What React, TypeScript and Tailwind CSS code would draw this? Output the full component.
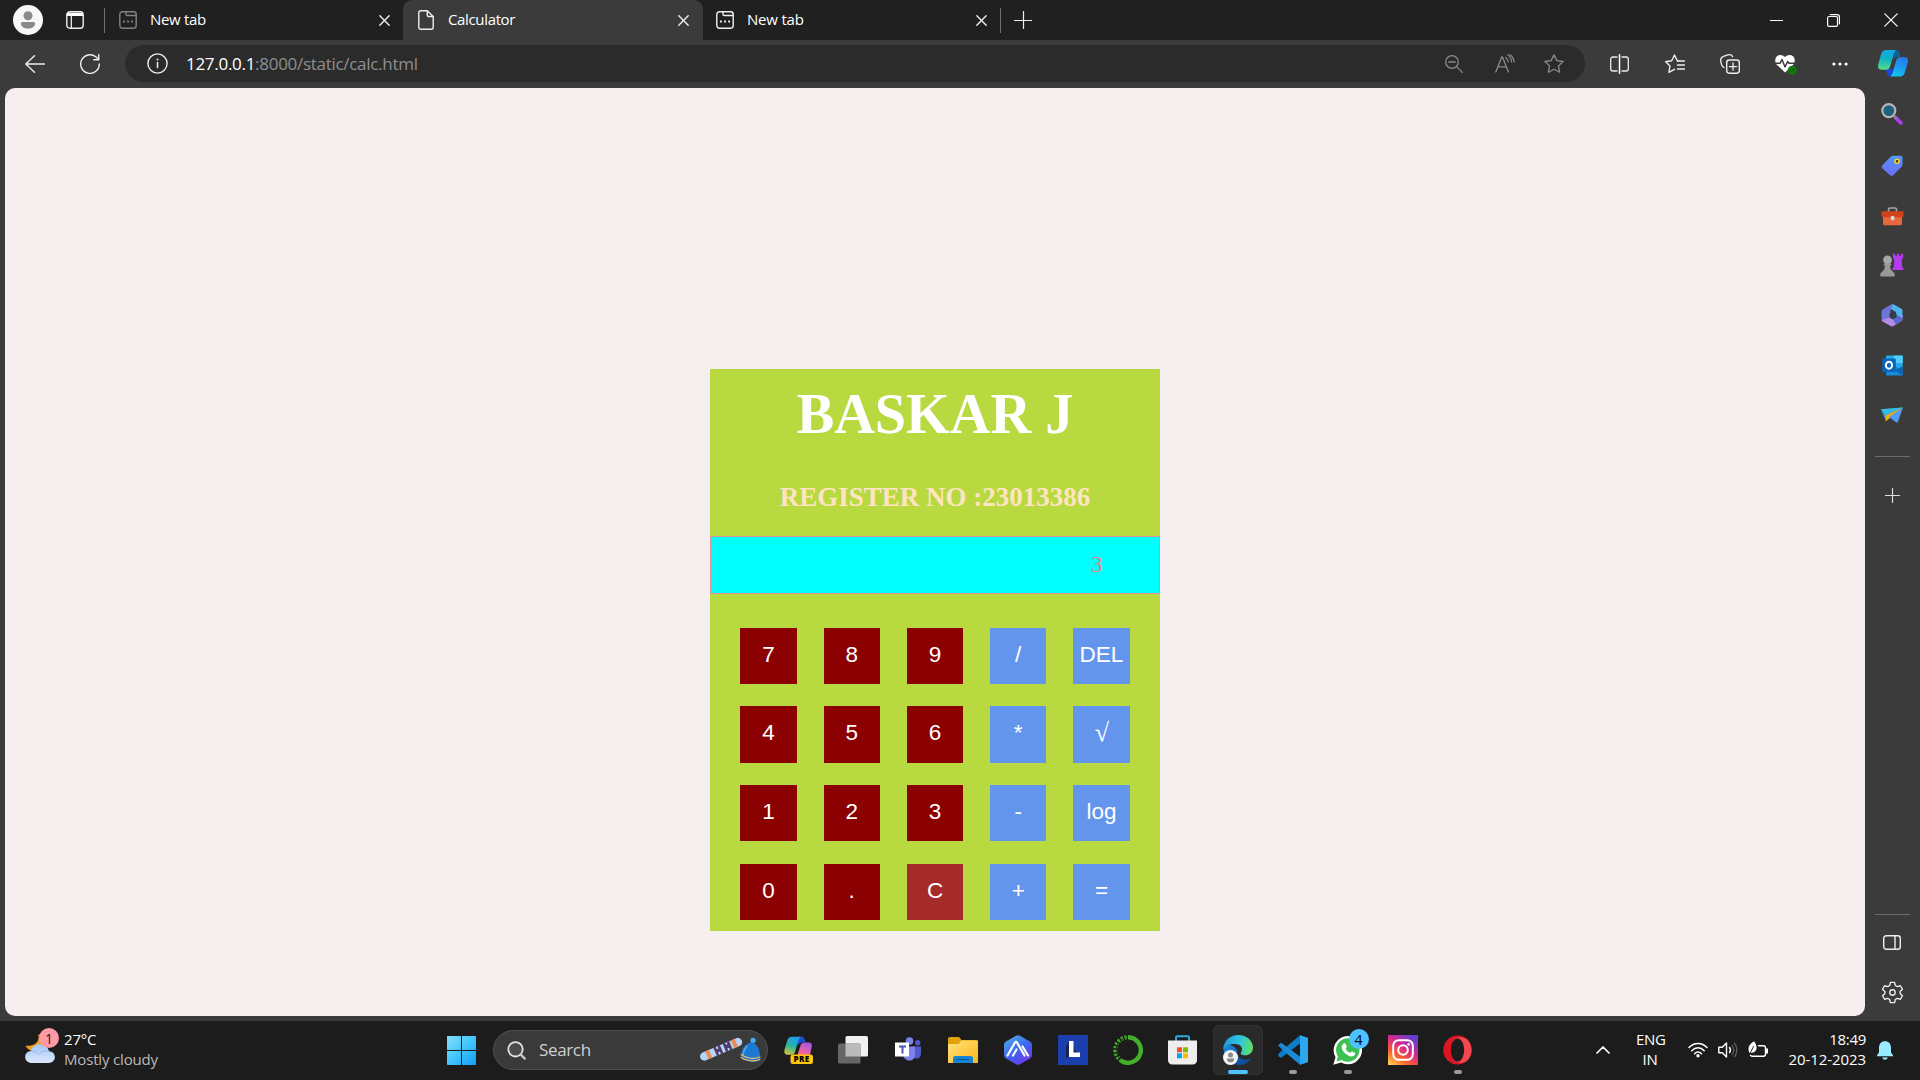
import React from "react";

type SvgProps = { w: number; h: number; className?: string; children: React.ReactNode };

function Svg({ w, h, className = "", children }: SvgProps) {
  return (
    <svg
      width={w}
      height={h}
      viewBox={`0 0 ${w} ${h}`}
      fill="none"
      className={`shrink-0 ${className}`}
      strokeLinecap="round"
      strokeLinejoin="round"
    >
      {children}
    </svg>
  );
}

function CloseX({ className = "" }: { className?: string }) {
  return (
    <Svg w={11} h={11} className={className}>
      <path d="M.8.8l9.400 9.400M10.200.8L.8 10.200" stroke="#eee" strokeWidth="1.400" />
    </Svg>
  );
}

function NewTabIcon({ color }: { color: string }) {
  return (
    <Svg w={18} h={18}>
      <rect x=".8" y=".8" width="16.4" height="16.4" rx="2.6" stroke={color} strokeWidth="1.400" />
      <path d="M7 1v2.200c0 .9.500 1.300 1.300 1.300H17" stroke={color} strokeWidth="1.400" />
      <path d="M4 9.600h1.800v1.800H4zM8.100 9.600h1.800v1.800H8.100zM12.200 9.600H14v1.800h-1.800z" fill={color} />
    </Svg>
  );
}

function TabStrip() {
  return (
    <div className="flex h-10 w-full items-center bg-[#202020]">
      <Svg w={30} h={30} className="ml-[13px]">
        <circle cx="15" cy="15" r="15" fill="#f8f8f8" />
        <circle cx="15" cy="10.8" r="4.5" fill="#8a8a8a" />
        <path d="M9.500 17h11c1.200 0 1.800.8 1.600 1.900-.5 3-3.500 4.600-7.100 4.600s-6.600-1.600-7.100-4.600C7.700 17.800 8.300 17 9.500 17z" fill="#8a8a8a" />
      </Svg>
      <Svg w={18} h={18} className="ml-[23px]">
        <rect x=".8" y=".8" width="16.4" height="16.4" rx="3" stroke="#eee" strokeWidth="1.4" />
        <path d="M1 1.800h16V5H1z" fill="#fff" />
        <path d="M5.300 5v12" stroke="#eee" strokeWidth="1.300" />
      </Svg>
      <div className="ml-5 h-[25px] w-px bg-[#707070]" />
      <div className="ml-3.5 flex w-[284px] items-center">
        <NewTabIcon color="#808080" />
        <span className="ml-[13px] flex-1 pb-0.5 text-[15px] tracking-[-0.3px] text-white">New tab</span>
        <CloseX className="mr-[13px]" />
      </div>
      <div className="flex h-10 w-[300px] items-center rounded-t-[9px] bg-[#3b3b3b] pl-[15px]">
        <Svg w={16} h={20}>
          <path d="M2.800.8h6.500L15.200 6.500v10.700c0 1.200-.8 2-2 2H2.800c-1.200 0-2-.8-2-2V2.800c0-1.200.8-2 2-2z" stroke="#eee" strokeWidth="1.400" />
          <path d="M9.300 1v4.200c0 .8.500 1.300 1.300 1.300H15" stroke="#eee" strokeWidth="1.400" />
        </Svg>
        <span className="ml-3.5 flex-1 pb-0.5 text-[15px] tracking-[-0.35px] text-white">Calculator</span>
        <CloseX className="mr-3.5" />
      </div>
      <div className="flex w-[297px] items-center pl-[13px]">
        <NewTabIcon color="#f0f0f0" />
        <span className="ml-[13px] flex-1 pb-0.5 text-[15px] tracking-[-0.2px] text-white">New tab</span>
        <CloseX className="mr-[13px]" />
      </div>
      <div className="h-[25px] w-px bg-[#707070]" />
      <Svg w={18} h={18} className="mb-px ml-[13px]">
        <path d="M9.500.5v17M.5 9.500h17" stroke="#eee" strokeWidth="1.200" />
      </Svg>
      <div className="flex-1" />
      <div className="mr-11 h-px w-[13px] bg-white" />
      <Svg w={13} h={13} className="mr-11">
        <rect x=".6" y="2.500" width="9.900" height="9.900" rx="1.500" stroke="#fff" strokeWidth="1.200" />
        <path d="M3.200.6h6.800c1.500 0 2.400.9 2.400 2.400v6.800" stroke="#fff" strokeWidth="1.200" />
      </Svg>
      <Svg w={14} h={14} className="mr-[22px]">
        <path d="M.8.800l12.400 12.400M13.200.800L.8 13.200" stroke="#fff" strokeWidth="1.200" />
      </Svg>
    </div>
  );
}

function Toolbar() {
  return (
    <div className="flex h-12 w-full items-center bg-[#3b3b3b] pb-px">
      <Svg w={20} h={18} className="ml-[25px]">
        <path d="M19.400 9H.8M9.500.8L.8 9l8.700 8.200" stroke="#eee" strokeWidth="1.400" />
      </Svg>
      <Svg w={20} h={20} className="ml-[35px]">
        <path d="M19.300 10a9.300 9.300 0 1 1-3.500-7.200L18.500 5.500" stroke="#eee" strokeWidth="1.400" />
        <path d="M18.700.8v4.900h-4.900" stroke="#eee" strokeWidth="1.400" />
      </Svg>
      <div className="ml-[25px] flex h-[37px] w-[1460px] items-center rounded-full bg-[#2b2b2b] pl-[22px]">
        <Svg w={21} h={21}>
          <circle cx="10.500" cy="10.500" r="9.600" stroke="#eee" strokeWidth="1.400" />
          <path d="M10.500 9.500v5" stroke="#eee" strokeWidth="1.500" />
          <circle cx="10.500" cy="6.500" r="1" fill="#eee" />
        </Svg>
        <span className="ml-[18px] flex-1 text-[17px] tracking-[-0.29px] text-[#8f8f8f]">
          <span className="text-white">127.0.0.1</span>:8000/static/calc.html
        </span>
        <Svg w={18} h={18}>
          <circle cx="7" cy="7" r="6.300" stroke="#8b8b8b" strokeWidth="1.300" />
          <path d="M3.800 7h6.400M11.600 11.600l5.800 5.800" stroke="#8b8b8b" strokeWidth="1.300" />
        </Svg>
        <Svg w={20} h={19} className="ml-8">
          <path d="M.8 18L6.700 3h.8l5.900 15M2.900 12.800h8.300" stroke="#8b8b8b" strokeWidth="1.300" />
          <path d="M10.600 3.500c1.500.9 2.500 2.500 2.600 4.500M12.600.8c2.300 1.300 3.800 3.600 4 7.200M15.200.800c2 1.500 3.600 4.200 3.900 7.200" stroke="#8b8b8b" strokeWidth="1.200" />
        </Svg>
        <Svg w={20} h={19} className="ml-[29px]">
          <path d="M10 .9l2.800 5.700 6.300.9-4.600 4.400 1.100 6.300L10 15.200l-5.600 3 1.100-6.300L.9 7.500l6.300-.9z" stroke="#8b8b8b" strokeWidth="1.300" />
        </Svg>
        <div className="w-[21px]" />
      </div>
      <Svg w={19} h={20} className="ml-[25px]">
        <path d="M7 3H3C1.600 3 .7 3.900.7 5.300v9.400C.7 16.100 1.600 17 3 17h4M12 3h4c1.400 0 2.300.9 2.300 2.300v9.400c0 1.400-.9 2.300-2.300 2.300h-4" stroke="#eee" strokeWidth="1.300" />
        <path d="M9.500.7v18.600" stroke="#fff" strokeWidth="1.500" />
      </Svg>
      <Svg w={20} h={20} className="ml-9">
        <path d="M12.900 6.800l-.6-.1L9.500 1 6.700 6.800l-6 .9L5 12l-1.100 6.300 5.600-3" stroke="#eee" strokeWidth="1.400" />
        <path d="M12.500 7h7M12.500 11h7M12.500 15h7" stroke="#eee" strokeWidth="1.400" />
      </Svg>
      <Svg w={20} h={20} className="ml-[35px]">
        <path d="M4 13.500C2 12.500.9 9.500.7 6.200.6 4 1.500 3 3.500 2.300L8 .9c2.300-.6 3.800 0 4.700 1.800" stroke="#eee" strokeWidth="1.300" />
        <rect x="6.700" y="6" width="12.600" height="13.200" rx="2.600" stroke="#eee" strokeWidth="1.400" />
        <path d="M13 9v7.200M9.400 12.600h7.200" stroke="#eee" strokeWidth="1.300" />
      </Svg>
      <Svg w={22} h={21} className="mt-px ml-[35px]">
        <path d="M10 18.500L1.800 10.700C-.5 8-.1 4 2 2.200c2.400-2 5.800-1.500 8 .9 2.200-2.400 5.600-2.900 8-.9 2.100 1.800 2.500 5.800.2 8.500z" fill="#fff" />
        <path d="M0 9.300h5l2-3.800 3 7.500 2.700-5.500 1.300 1.800h7" stroke="#3b3b3b" strokeWidth="1.500" />
        <circle cx="17.200" cy="16.300" r="4.500" fill="#107c10" />
        <path d="M15.500 16.300l1.300 1.200 2.200-2.400" stroke="#064d06" strokeWidth="1" />
      </Svg>
      <Svg w={16} h={4} className="ml-[35px]">
        <circle cx="1.900" cy="2" r="1.600" fill="#fff" />
        <circle cx="8" cy="2" r="1.600" fill="#fff" />
        <circle cx="14.100" cy="2" r="1.600" fill="#fff" />
      </Svg>
      <Svg w={30} h={27} className="ml-[30px]">
        <defs>
          <linearGradient id="cpA" x1="8" y1="0" x2="6" y2="20" gradientUnits="userSpaceOnUse">
            <stop stopColor="#12a5e4" /><stop offset=".45" stopColor="#0db4c4" /><stop offset="1" stopColor="#5bdc86" />
          </linearGradient>
          <linearGradient id="cpB" x1="26" y1="7" x2="18" y2="27" gradientUnits="userSpaceOnUse">
            <stop stopColor="#2477e8" /><stop offset=".6" stopColor="#1ba2f5" /><stop offset="1" stopColor="#12c8ea" />
          </linearGradient>
        </defs>
        <path d="M16 .2h2.500c2.500 0 3.500 2.800 4 6.800h-4c-2.500 0-3.500 2-4 4z" fill="#0b6297" />
        <path d="M7 19h8.500l-1.800 7.500c-3 .2-4-1-4.800-3.500z" fill="#1c46d8" />
        <path d="M8 0h10.500C16 1.200 15.600 4 14.700 7.500L12 16.800c-.6 2-1.700 2.900-3.500 2.900H3.500C.5 19.700-.5 17 .3 14L3.200 4C4 1.300 5.500 0 8 0z" fill="url(#cpA)" />
        <path d="M22 26.500H12c2.400-1.200 2.900-4 3.700-7.200l2.600-9c.6-2 1.700-3 3.600-3H27c2.800 0 3.500 2.500 2.700 5.500l-2.900 9.700c-.8 2.700-2.300 4-4.800 4z" fill="url(#cpB)" />
      </Svg>
    </div>
  );
}

const keys: { label: string; tone: "num" | "op" | "clear" }[] = [
  { label: "7", tone: "num" }, { label: "8", tone: "num" }, { label: "9", tone: "num" }, { label: "/", tone: "op" }, { label: "DEL", tone: "op" },
  { label: "4", tone: "num" }, { label: "5", tone: "num" }, { label: "6", tone: "num" }, { label: "*", tone: "op" }, { label: "√", tone: "op" },
  { label: "1", tone: "num" }, { label: "2", tone: "num" }, { label: "3", tone: "num" }, { label: "-", tone: "op" }, { label: "log", tone: "op" },
  { label: "0", tone: "num" }, { label: ".", tone: "num" }, { label: "C", tone: "clear" }, { label: "+", tone: "op" }, { label: "=", tone: "op" },
];

const tones = { num: "bg-[#8b0000]", op: "bg-[#6495ed]", clear: "bg-[#a52a2a]" };

function Calculator() {
  return (
    <div className="mt-[281px] flex h-[562px] w-[450px] flex-col bg-[#b8d940] text-center font-['Liberation_Serif',serif]">
      <h1 className="mt-[13px] h-16 text-[56.25px] leading-[64px] font-bold text-white">BASKAR J</h1>
      <h2 className="mt-[35px] h-8 text-[27px] leading-8 font-bold text-[#ffe4c4]">REGISTER NO :23013386</h2>
      <div className="mt-[23px] flex h-[58px] items-center justify-end border border-[#df8f96] bg-[#00ffff] pr-[56.5px] text-[22.5px] text-[#f08080]">
        3
      </div>
      <div className="mt-[33.6px] ml-[30.375px] grid grid-cols-[repeat(5,56.25px)] gap-x-[27px] gap-y-[22.5px]">
        {keys.map((k) => (
          <button
            key={k.label}
            className={`flex h-[56.25px] items-center justify-center pb-[2.5px] font-['Liberation_Sans',sans-serif] text-[22.5px] text-white ${tones[k.tone]}`}
          >
            {k.label === "√" ? <span className="pb-0.5 pl-px font-['Liberation_Serif',serif] text-[26px]">√</span> : k.label}
          </button>
        ))}
      </div>
    </div>
  );
}

function Sidebar() {
  return (
    <div className="flex w-[55px] flex-col items-center bg-[#3b3b3b] pt-[15px] pr-px">
      <Svg w={22} h={22}>
        <path d="M14.500 14.500l5.300 5.300" stroke="#b13cf0" strokeWidth="3.800" />
        <path d="M12.800 12.800l2.400 2.400" stroke="#888" strokeWidth="2" />
        <circle cx="7.800" cy="7.600" r="6.500" fill="#1f5f80" stroke="#b5b5b5" strokeWidth="2.200" />
      </Svg>
      <Svg w={22} h={22} className="mt-[30px]">
        <defs><linearGradient id="tg" x1="14" y1="0" x2="10" y2="22" gradientUnits="userSpaceOnUse"><stop stopColor="#4f9bfa" /><stop offset="1" stopColor="#7068f4" /></linearGradient></defs>
        <path d="M12 .8h7.500c1.300 0 2 .7 2 2V9.500c0 .9-.3 1.600-1 2.300l-8.300 8.500c-1 1-2 1-3 0L1.400 13.500c-1-1-1-2.300 0-3.300L9.700 1.800C10.400 1.100 11 .8 12 .8z" fill="url(#tg)" />
        <circle cx="16" cy="6.300" r="2" fill="#423600" stroke="#ffd21e" strokeWidth="1.500" />
      </Svg>
      <Svg w={23} h={19} className="mt-[30px]">
        <path d="M7.500 5V2.500c0-1 .5-1.500 1.500-1.500h5c1 0 1.500.5 1.500 1.500V5" stroke="#a9a9a9" strokeWidth="1.600" />
        <path d="M2 9h19v7.500c0 1-.6 1.700-1.600 1.700H3.600c-1 0-1.600-.7-1.600-1.700z" fill="#e9673b" />
        <rect x=".5" y="4.300" width="22" height="6" rx="1.300" fill="#cf431c" />
        <rect x="9.700" y="9" width="3.800" height="4.300" rx="1" fill="#d2d2d2" />
      </Svg>
      <Svg w={24} h={24} className="mt-[27px]">
        <path d="M13 .8h2.200v2h1.900v-2h2v2H21v-2h2.200v4l-1.500 1.700.5 7.500 1.300 1.600V17h-11v-1.400l1.300-1.600.5-7.500L13 4.800z" fill="#b43bef" />
        <circle cx="7.500" cy="6.800" r="4.400" fill="#a8a8a8" />
        <path d="M3.700 10.500h7.600v2H10c0 3 1 4.800 3.300 6.400 1.100.8 1.500 1.800 1.500 3.300 0 .8-.5 1.300-1.300 1.300h-12c-.8 0-1.300-.5-1.300-1.300 0-1.500.4-2.500 1.500-3.300C4 17.300 5 15.500 5 12.500H3.700z" fill="#999" />
      </Svg>
      <Svg w={22} h={23} className="mt-[27px]">
        <path d="M12 0l8 4.500c1 .6 1.500 1.500 1.500 2.600v7.400l-6.500-3.500V8L9 4.500z" fill="#4bb5ee" />
        <path d="M12 .2L9.500 5v9L2 17.500C.9 16.500.5 15.500.5 14V8c0-1.200.6-2.200 1.600-2.800L9.500.7C10.500.1 11.200 0 12 .2z" fill="#6d75d8" />
        <path d="M21.500 11v3.500c0 1.200-.5 2.200-1.500 2.800l-7.500 4.800c-1 .6-2 .6-3 0L2 17.800C1.200 17.300.9 17 .7 16L8.500 13.500l3.500 2z" fill="#b58be8" />
        <path d="M15 11.500l6.500 2c-.2 2-.6 3-1.500 3.800l-5 3.200-3-5z" fill="#5868d5" />
        <path d="M8.500 9.500L12 7.500l3.500 2v3.700L12 15.200l-3.500-2z" fill="#393b46" />
      </Svg>
      <Svg w={21} h={21} className="mt-[28px]">
        <path d="M4 2C4 1 4.500.6 5.400.6h14c.9 0 1.300.5 1.300 1.400v16.500H4z" fill="#29a9ea" />
        <path d="M12 .6h8.700V8H12z" fill="#50d0fb" />
        <path d="M4 11.500h9.500l7.200 4v4c0 .7-.5 1-1.200 1H5c-.7 0-1-.3-1-1z" fill="#168bd8" />
        <path d="M20.700 11v9.500L13 15.500z" fill="#1262ac" />
        <rect x=".3" y="3.500" width="13.500" height="13.500" rx="1.300" fill="#0a64bc" />
        <ellipse cx="7" cy="10.200" rx="3.100" ry="3.500" stroke="#fff" strokeWidth="1.900" />
      </Svg>
      <Svg w={22} h={16} className="mt-[31px]">
        <path d="M0 2.200L22 .6 8 9 4 12z" fill="#2fa7dd" />
        <path d="M22 .6L4.500 8.500V14.500L9 11z" fill="#f8aa13" />
        <path d="M22 .6L8 10 15.500 15.400c.6.400 1 .2 1.300-.4z" fill="#4e9df2" />
        <path d="M0 2.200L22 .6 4.500 7.500z" fill="#34bde1" />
      </Svg>
      <div className="mt-[33px] ml-px h-px w-[35px] bg-[#6c6c6c]" />
      <Svg w={15} h={15} className="mt-[31px]">
        <path d="M7.500.5v14M.5 7.500h14" stroke="#ddd" strokeWidth="1.200" />
      </Svg>
      <div className="flex-1" />
      <div className="ml-px h-px w-[35px] bg-[#6c6c6c]" />
      <Svg w={18} h={15} className="mt-5">
        <rect x=".7" y=".7" width="16.600" height="13.600" rx="2.600" stroke="#eee" strokeWidth="1.400" />
        <path d="M12 1v13" stroke="#eee" strokeWidth="1.400" />
      </Svg>
      <svg width="25" height="25" viewBox="0 0 24 24" fill="none" className="mt-[30px] mb-4 shrink-0" stroke="#eee" strokeWidth="1.300" strokeLinejoin="round">
        <path d="M10 2.300h4l.7 3 1.900 1.100 3-.9 2 3.400-2.300 2.100v2l2.300 2.100-2 3.400-3-.9-1.900 1.100-.7 3h-4l-.7-3-1.900-1.100-3 .9-2-3.400L4.700 13v-2L2.400 8.900l2-3.400 3 .9 1.900-1.100z" />
        <circle cx="12" cy="12" r="2.600" />
      </svg>
    </div>
  );
}

function Slot({ children, dot = false, active = false }: { children: React.ReactNode; dot?: boolean; active?: boolean }) {
  return (
    <div className="flex w-[55px] justify-center">
      <div className={`relative flex h-[50px] w-[50px] items-center justify-center rounded-md ${active ? "border border-[#333] bg-[#2a2a2a]" : ""}`}>
        {children}
        {dot && <div className="absolute bottom-px left-[21px] h-1 w-2 rounded-full bg-[#9a9a9a]" />}
        {active && <div className="absolute bottom-0 left-[14px] h-1 w-5 rounded-full bg-[#4cc2ff]" />}
      </div>
    </div>
  );
}

function Taskbar() {
  return (
    <div className="flex h-[59px] w-full items-center bg-[#1c1c1c] pb-px text-white">
      <div className="relative mb-1 ml-[25px] h-[30px] w-[30px]">
        <Svg w={30} h={30}>
          <defs><linearGradient id="cl" x1="0" y1="12" x2="0" y2="30" gradientUnits="userSpaceOnUse"><stop stopColor="#a9c7f5" /><stop offset="1" stopColor="#dbe8fb" /></linearGradient></defs>
          <path d="M13 1c2.500 6-2 13-12.500 11.500C2 16 6 18.500 11 18c6-.8 9-6 8-10.500C18.300 4.500 16 2 13 1z" fill="#f0a020" />
          <path d="M7 30c-4 0-6.800-2.500-6.800-6 0-3.300 2.500-5.700 5.800-5.900C7 14 10.500 11.300 15 11.300c4.600 0 8 2.700 9 6.900 3.300.1 5.900 2.500 5.900 5.900 0 3.400-2.700 5.900-6.500 5.900z" fill="url(#cl)" />
          <path d="M6 18.100c3.500-.5 6 .8 7.500 3M15 20c1.500-1.900 5-2.600 9-1.800" stroke="#8eb0ea" strokeWidth=".9" />
        </Svg>
        <div className="absolute -top-[5px] left-[14px] flex h-5 w-5 items-center justify-center rounded-full bg-[#ff99a4] text-[14px] text-[#222]">1</div>
      </div>
      <div className="mb-[3px] ml-[9px] w-[383px] text-[15px] leading-5 tracking-[-0.17px]">
        <div>27°C</div>
        <div className="text-[#bababa]">Mostly cloudy</div>
      </div>
      <Svg w={29} h={29}>
        <defs><linearGradient id="win" x1="0" y1="0" x2="29" y2="29" gradientUnits="userSpaceOnUse"><stop stopColor="#86defc" /><stop offset=".5" stopColor="#42c5fb" /><stop offset="1" stopColor="#129bf6" /></linearGradient></defs>
        <path d="M1 0h13v14H0V1c0-.6.400-1 1-1zM15 0h13c.6 0 1 .4 1 1v13H15zM0 15h14v14H1c-.6 0-1-.4-1-1zM15 15h14v13c0 .6-.4 1-1 1H15z" fill="url(#win)" />
      </Svg>
      <div className="ml-[17px] flex h-10 w-[275px] items-center rounded-full border border-[#505050] bg-[#3a3a3a] pl-[13px]">
        <Svg w={19} h={19}>
          <circle cx="8.500" cy="8.300" r="7.200" fill="#4a4a4a" stroke="#e2e2e2" strokeWidth="1.800" />
          <path d="M13.800 13.600l4 4" stroke="#c8c8c8" strokeWidth="2.200" />
        </Svg>
        <span className="ml-[13px] flex-1 text-[17px] tracking-[-0.35px] text-[#cfcfcf]">Search</span>
        <Svg w={62} h={28} className="mr-[6px]">
          <g transform="rotate(-23 22 13)">
            <rect x="-.5" y="9" width="45" height="8.600" rx="4.300" fill="#b5d5f4" />
            <path d="M6.500 9h4v8.600h-4zM34.500 9h4v8.600h-4z" fill="#e98b52" />
            <path d="M15.500 8.500h2.500v3h2V8h2.500v10.500H20V15h-2v3.500h-2.500zM25.500 8h2.500v3h2V7.500h2.500v10.500H30v-3h-2v3.500h-2.500z" fill="#513b6b" />
          </g>
          <circle cx="54" cy="4.500" r="2.700" fill="#49a8f4" />
          <path d="M42 18.500C43 11 48 6.800 52.500 6.500c5 0 8.500 7 8.500 14.500v3.500c-5 2.500-14 1.500-19-2.500z" fill="#1d78d2" />
          <path d="M48 10c-2.500 3-3.700 6-3.900 9" stroke="#5eaef2" strokeWidth="1.400" />
          <path d="M42 18.500c5 4 13 5 19 2.500M42 21.500c5 3.500 13 4.500 19 2" stroke="#f0bd62" strokeWidth="1.100" />
        </Svg>
      </div>
      <div className="ml-[2px] flex">
        <Slot>
          <div className="relative ml-px flex">
            <Svg w={29} h={28}>
              <defs>
                <linearGradient id="pa" x1="9" y1="0" x2="3" y2="19" gradientUnits="userSpaceOnUse"><stop stopColor="#239af0" /><stop offset=".5" stopColor="#25b6a0" /><stop offset="1" stopColor="#e5c32c" /></linearGradient>
                <linearGradient id="pb" x1="24" y1="6" x2="18" y2="19" gradientUnits="userSpaceOnUse"><stop stopColor="#a552e8" /><stop offset="1" stopColor="#ff6b8d" /></linearGradient>
              </defs>
              <path d="M14 .8h4c2 0 2.800 2 3.500 5.500h-4l-4 3z" fill="#1b4fd0" />
              <path d="M8 .8h9c-2 1-2.500 3.500-3.300 6L11 16c-.6 2-1.500 2.700-3.200 2.700H3.500C.5 18.700-.2 16.500.6 13.500l2.600-9C4 2 5.500.8 8 .8z" fill="url(#pa)" />
              <path d="M20 6.500h5c2.600 0 3.400 2 2.600 5L26 19H13.500l3-9.500c.6-2 1.600-3 3.500-3z" fill="url(#pb)" />
              <rect x="6.500" y="18.500" width="22.500" height="9.500" rx="2.500" fill="#ffc60a" />
            </Svg>
            <span className="absolute bottom-0 left-[7px] w-[22px] text-center text-[8px] leading-[10px] font-extrabold tracking-[0.4px] text-black">PRE</span>
          </div>
        </Slot>
        <Slot>
          <Svg w={30} h={30}>
            <rect x="7.500" y="1" width="22.500" height="20.500" rx="1.500" fill="#f0f0f0" />
            <rect x="0" y="8.500" width="22.500" height="20" rx="1.500" fill="#666" />
            <path d="M7.500 8.500h15v13h-15z" fill="#bbb" />
          </Svg>
        </Slot>
        <Slot>
          <Svg w={27} h={24} className="mb-[2px] ml-[2px]">
            <circle cx="22.700" cy="5.700" r="2.700" fill="#5059c9" />
            <circle cx="14.500" cy="4" r="3.800" fill="#7b83eb" />
            <path d="M17 9.500h9v7c0 3-2 5-4.500 5S17 19.500 17 17z" fill="#5059c9" />
            <path d="M8 9.500h12V18c0 3.500-2.500 5.500-5.500 5.500S8.500 21.500 8 18z" fill="#7b83eb" />
            <path d="M0 5.500h14v14H0z" fill="#fff" />
            <path d="M4 9.500h7M7.500 9v7.500" stroke="#4b53bc" strokeWidth="2" strokeLinecap="butt" />
          </Svg>
        </Slot>
        <Slot>
          <Svg w={30} h={28}>
            <defs><linearGradient id="fo" x1="5" y1="4" x2="25" y2="28" gradientUnits="userSpaceOnUse"><stop stopColor="#ffe07a" /><stop offset="1" stopColor="#fcb91c" /></linearGradient></defs>
            <path d="M0 3c0-1.200.8-2 2-2h8c1 0 1.500.3 2 1l1.500 2H28c1.300 0 2 .7 2 2v8H0z" fill="#e2a20c" />
            <path d="M0 8h10.500L13.500 4.500H29c.6 0 1 .4 1 1V27H0z" fill="url(#fo)" />
            <path d="M5 27v-4.500C5 20.800 6 20 7.500 20h15c1.500 0 2.500.8 2.500 2.500V27z" fill="#1584d2" />
            <path d="M9 23.500h12" stroke="#0a5595" strokeWidth="1.200" />
          </Svg>
        </Slot>
        <Slot>
          <Svg w={28} h={30}>
            <defs><linearGradient id="hx" x1="4" y1="2" x2="22" y2="28" gradientUnits="userSpaceOnUse"><stop stopColor="#4fa3ec" /><stop offset=".55" stopColor="#3d63ec" /><stop offset="1" stopColor="#7437f0" /></linearGradient></defs>
            <path d="M12 .8c1.300-.8 2.700-.8 4 0l10 5.800c1.300.8 2 1.900 2 3.500v9.800c0 1.600-.7 2.700-2 3.500l-10 5.800c-1.300.8-2.700.8-4 0L2 23.400c-1.300-.8-2-1.900-2-3.500v-9.800c0-1.600.7-2.700 2-3.500z" fill="url(#hx)" />
            <path d="M3.500 20.500l7.500-13c.6-1 1.400-1 2 0l7.500 13M9 20.500l3.500-6M18.500 11.500l5.500 9" stroke="#fff" strokeWidth="2.200" />
          </Svg>
        </Slot>
        <Slot>
          <div className="relative h-[30px] w-[30px] bg-[#1c3fae]">
            <Svg w={30} h={30}>
              <path d="M11 6l-3 6v11l4-2h9z" fill="#123" opacity=".8" />
              <path d="M11 6h4.500v11.500H22V22H11z" fill="#fff" />
            </Svg>
          </div>
        </Slot>
        <Slot>
          <Svg w={30} h={30}>
            <path d="M15 2.200a12.800 12.800 0 1 1-7 23.500" stroke="#43b02a" strokeWidth="4.400" strokeLinecap="butt" />
            <path d="M8.500 26A12.800 12.800 0 0 1 15 2.200" stroke="#43b02a" strokeWidth="4" strokeDasharray="2.200 1.500" strokeLinecap="butt" />
            <path d="M7 24A12.800 12.800 0 0 1 12 3" stroke="#1c1c1c" strokeWidth="1" strokeDasharray="3 2" />
          </Svg>
        </Slot>
        <Slot>
          <Svg w={29} h={30}>
            <path d="M8 7V2.500C8 1.700 8.400 1.300 9.200 1.300h10.600c.8 0 1.200.4 1.200 1.200V7" stroke="#29a9e0" strokeWidth="2" />
            <path d="M0 5.500h29V25c0 2.800-1.700 4.500-4.500 4.500h-20C1.700 29.500 0 27.800 0 25z" fill="#eee" />
            <path d="M9 12.300h5v5H9z" fill="#f25022" /><path d="M15 12.300h5v5h-5z" fill="#7fba00" />
            <path d="M9 18.300h5v5H9z" fill="#00a4ef" /><path d="M15 18.300h5v5h-5z" fill="#ffb900" />
          </Svg>
        </Slot>
        <Slot active>
          <Svg w={30} h={30}>
            <defs>
              <linearGradient id="ea" x1="3" y1="6" x2="30" y2="12" gradientUnits="userSpaceOnUse"><stop stopColor="#209fe0" /><stop offset=".5" stopColor="#30c5dd" /><stop offset="1" stopColor="#62e05d" /></linearGradient>
              <linearGradient id="eb" x1="2" y1="10" x2="18" y2="28" gradientUnits="userSpaceOnUse"><stop stopColor="#1e8be0" /><stop offset="1" stopColor="#0e4f9e" /></linearGradient>
            </defs>
            <path d="M.3 13C1 19 4 29.800 16 29.900c5 0 9.500-2.400 11.800-6.400-8 3.500-14.500-.8-13.500-8C10 8 3 9 .3 13z" fill="url(#eb)" />
            <path d="M.2 14C1 5.500 7 .1 15 .1c9 0 15 6.200 15 12.300 0 5-3.700 7.800-7.800 7.800-3.600 0-5.400-1.300-4-3 2-2.900.6-8.200-6.200-8.200C6.500 9 2.200 11 .2 14z" fill="url(#ea)" />
            <circle cx="7.500" cy="22.500" r="7.500" fill="#f5f5f5" />
            <circle cx="7.500" cy="20" r="2.500" fill="#8a8a8a" />
            <path d="M4 23.500h7c.7 2.300-1.300 3.700-3.500 3.700S3.300 25.800 4 23.500z" fill="#8a8a8a" />
          </Svg>
        </Slot>
        <Slot dot>
          <Svg w={30} h={30}>
            <path d="M22 .3L30 3v24l-8 2.700L22 21.500V8.500L3.200 22.800.3 21.200V19L4.500 15 22 .3z" fill="#0f7bc4" />
            <path d="M0 10.200l3.200-2.500L22 21.500v8.200L4 14.500z" fill="#1a8ad6" />
            <path d="M22 .3L30 3v24l-8 2.700z" fill="#2ea6ee" />
          </Svg>
        </Slot>
        <Slot dot>
          <Svg w={30} h={30}>
            <path d="M.3 29.700l2.200-7.500A14.200 14.200 0 1 1 8 27.600z" fill="#fff" />
            <path d="M3.500 26.500l1.500-5A11.700 11.700 0 1 1 8.600 25z" fill="#3cc053" />
            <path d="M10.500 8.500c.9-.6 1.800-.4 2.200.5l1 2.400c.3.800-1 1.700-1 2.300.8 1.900 2.300 3.200 4.200 4.100.7 0 1.500-1.600 2.300-1.300l2.500 1.200c.8.500.5 1.800-.2 2.600-1.500 1.700-4.200 1.300-6.700-.1-2.700-1.500-5-4-5.900-6.500-.7-2.200.1-4.200 1.600-5.200z" fill="#fff" />
          </Svg>
          <div className="absolute top-1 left-[26px] flex h-5 w-5 items-center justify-center rounded-full bg-[#4cc2ff] text-[14px] text-black">4</div>
        </Slot>
        <Slot>
          <Svg w={30} h={30}>
            <defs>
              <linearGradient id="ig" x1="3" y1="30" x2="24" y2="0" gradientUnits="userSpaceOnUse"><stop stopColor="#fecb4e" /><stop offset=".3" stopColor="#f9602e" /><stop offset=".6" stopColor="#d7298b" /><stop offset="1" stopColor="#5b3fd8" /></linearGradient>
            </defs>
            <path d="M0 0h30v30H0z" fill="url(#ig)" />
            <rect x="5.200" y="5.200" width="19.600" height="19.600" rx="5.500" stroke="#fff" strokeWidth="2" />
            <circle cx="15" cy="15" r="4.800" stroke="#fff" strokeWidth="2" />
            <circle cx="20.600" cy="9.400" r="1.300" fill="#fff" />
          </Svg>
        </Slot>
        <Slot dot>
          <Svg w={29} h={30}>
            <ellipse cx="14.500" cy="15" rx="14.200" ry="14.500" fill="#dc1523" />
            <path d="M10 5.500C14 1 20 1.500 24 4.300c6 5.500 6 16 0 21.400-4 2.800-10 3.300-14-1.200z" fill="#f5474f" />
            <ellipse cx="14.500" cy="15" rx="6.700" ry="11.500" fill="#1c1c1c" />
          </Svg>
        </Slot>
      </div>
      <div className="flex-1" />
      <Svg w={14} h={8} className="mr-[26px]">
        <path d="M1 7l6-6 6 6" stroke="#fff" strokeWidth="1.700" />
      </Svg>
      <div className="mr-6 mb-0.5 w-7 text-center text-[15px] leading-5 tracking-[-0.3px]">
        <div>ENG</div>
        <div>IN</div>
      </div>
      <Svg w={20} h={16} className="mr-[10px]">
        <path d="M1 5.500c5-5.500 13-5.500 18 0M3.800 8.700c3.500-3.900 8.900-3.900 12.400 0M6.600 11.700c2-2.200 4.800-2.200 6.800 0" stroke="#fff" strokeWidth="1.500" />
        <circle cx="10" cy="13.800" r="1.700" fill="#fff" />
      </Svg>
      <Svg w={20} h={18} className="mr-[10px]">
        <path d="M.8 6.300h3.500L8.500 2v14l-4.200-4.300H.8z" stroke="#fff" strokeWidth="1.400" />
        <path d="M11.500 6.500c1.200 1.500 1.200 3.500 0 5" stroke="#fff" strokeWidth="1.400" />
        <path d="M14 4.500c2.200 2.700 2.200 6.300 0 9M16.500 2.300c3.200 4 3.200 9.400 0 13.400" stroke="#5a5a5a" strokeWidth="1.400" />
      </Svg>
      <Svg w={20} h={17} className="mr-[36px] mb-px">
        <path d="M10.500 4.700h5c1.400 0 2 .6 2 2v6.600c0 1.400-.6 2-2 2H5c-1.200 0-2-.3-2.500-1" stroke="#fff" strokeWidth="1.400" />
        <path d="M19 8.300v3.500" stroke="#fff" strokeWidth="2" />
        <path d="M1.500 12C-.8 7 .8 3.300 6 .3c3 3.700 4 8.700 0 10.900-1.300.6-2.800.5-4.500.8z" fill="#fff" />
        <path d="M1.500 13.500L5.500 5.500" stroke="#1c1c1c" strokeWidth=".9" />
      </Svg>
      <div className="mb-[3px] w-[62px] text-right text-[15px] leading-5 tracking-[-0.3px] whitespace-nowrap">
        <div>18:49</div>
        <div className="ml-[-20px] tracking-[-0.08px]">20-12-2023</div>
      </div>
      <Svg w={16} h={19} className="mr-[27px] ml-[11px]">
        <path d="M8 .3c3.800 0 6 2.700 6 6.500v4.700l2 2.800v1H0v-1l2-2.800V6.800C2 3 4.200.3 8 .3z" fill="#99ebff" />
        <path d="M5.300 16.500h5.400c-.4 1.500-1.300 2.200-2.700 2.200s-2.300-.7-2.700-2.200z" fill="#99ebff" />
      </Svg>
    </div>
  );
}

export default function App() {
  return (
    <div className="flex h-[1080px] w-[1920px] flex-col overflow-hidden bg-[#3b3b3b] font-['Open_Sans','Noto_Sans',sans-serif]">
      <TabStrip />
      <Toolbar />
      <div className="flex h-[933px]">
        <main className="ml-[5px] flex h-[928px] w-[1860px] justify-center rounded-[10px] bg-[#f5efef]">
          <Calculator />
        </main>
        <Sidebar />
      </div>
      <Taskbar />
    </div>
  );
}
